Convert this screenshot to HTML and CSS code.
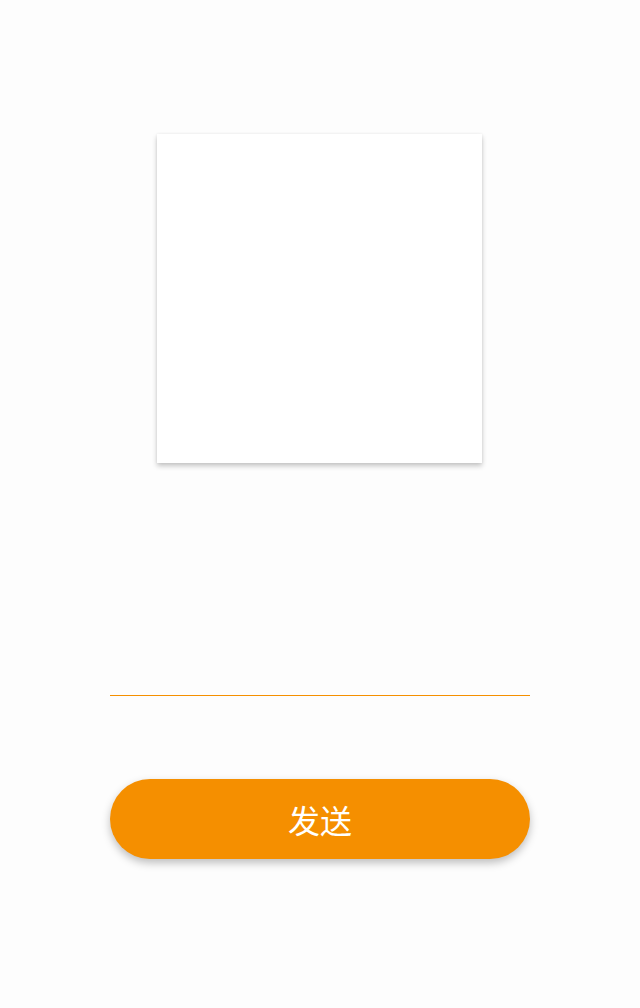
FILE: index.html
```html
<!DOCTYPE html>
<html lang="zh">
<head>
<meta charset="utf-8">
<link rel="stylesheet" href="styles.css">
</head>
<body>
<main class="page">
  <div class="card"></div>
  <div class="field"></div>
  <button class="send">发送</button>
</main>
</body>
</html>
```
FILE: styles.css
```css
html, body {
  margin: 0;
  padding: 0;
  background: #fdfdfd;
  font-family: "Noto Sans CJK SC", "Noto Sans", sans-serif;
}
.page {
  width: 640px;
  height: 1008px;
  display: flex;
  flex-direction: column;
  align-items: center;
  padding-top: 134px;
  box-sizing: border-box;
}
.card {
  width: 325px;
  height: 329px;
  margin-right: 2px;
  background: #ffffff;
  box-shadow: 0 3px 5px rgba(0,0,0,0.22), 0 0 3px rgba(0,0,0,0.06);
}
.field {
  width: 420px;
  height: 1px;
  background: #f59000;
  margin-top: 232px;
}
.send {
  margin-top: 83px;
  width: 420px;
  height: 80px;
  border: none;
  border-radius: 40px;
  background: #f58f00;
  color: #ffffff;
  font-family: "Noto Sans CJK SC", "Noto Sans", sans-serif;
  font-size: 32px;
  box-shadow: 0 4px 8px rgba(0,0,0,0.25);
  padding: 0;
}
```
